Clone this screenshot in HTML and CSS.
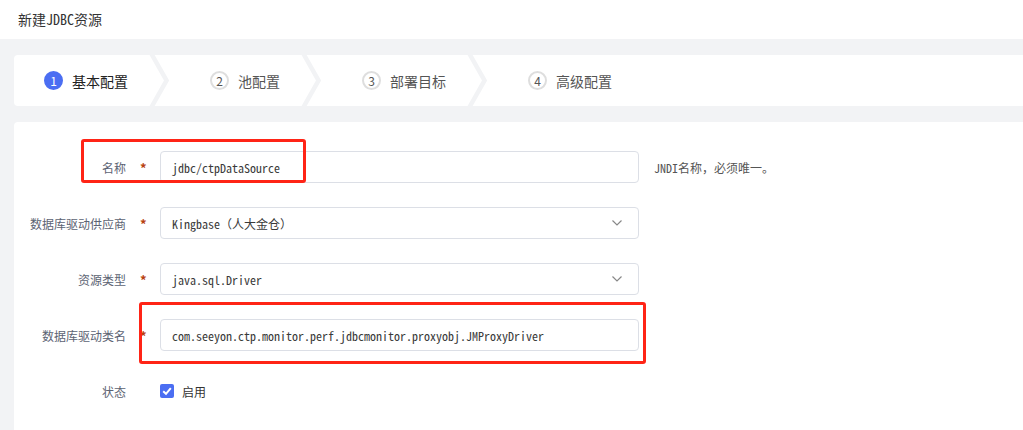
FILE: index.html
```html
<!DOCTYPE html>
<html lang="zh-CN">
<head>
    <meta charset="UTF-8">
    <title>新建JDBC资源</title>
    <link rel="stylesheet" href="styles.css">
</head>
<body>
    <div class="page-header">新建JDBC资源</div>

    <div class="page-body">
        <div class="steps">
            <div class="step step-first active">
                <span class="step-num">1</span>
                <span class="step-title">基本配置</span>
            </div>
            <svg class="step-sep" width="20" height="51" viewBox="0 0 20 51">
                <polyline points="2.5,-1 17.5,25.5 2.5,52" fill="none" stroke="#f2f3f5" stroke-width="4.5"/>
            </svg>
            <div class="step">
                <span class="step-num">2</span>
                <span class="step-title">池配置</span>
            </div>
            <svg class="step-sep" width="20" height="51" viewBox="0 0 20 51">
                <polyline points="2.5,-1 17.5,25.5 2.5,52" fill="none" stroke="#f2f3f5" stroke-width="4.5"/>
            </svg>
            <div class="step">
                <span class="step-num">3</span>
                <span class="step-title">部署目标</span>
            </div>
            <svg class="step-sep" width="20" height="51" viewBox="0 0 20 51">
                <polyline points="2.5,-1 17.5,25.5 2.5,52" fill="none" stroke="#f2f3f5" stroke-width="4.5"/>
            </svg>
            <div class="step">
                <span class="step-num">4</span>
                <span class="step-title">高级配置</span>
            </div>
        </div>

        <div class="form-card">
            <div class="form-row">
                <label class="form-label">名称</label>
                <span class="required">*</span>
                <div class="input">jdbc/ctpDataSource</div>
                <span class="form-tip">JNDI名称，必须唯一。</span>
            </div>
            <div class="form-row">
                <label class="form-label">数据库驱动供应商</label>
                <span class="required">*</span>
                <div class="input select">
                    Kingbase（人大金仓）
                    <svg class="caret" width="10" height="6" viewBox="0 0 10 6">
                        <polyline points="0.5,0.5 5,5 9.5,0.5" fill="none" stroke="#888" stroke-width="1.2"/>
                    </svg>
                </div>
            </div>
            <div class="form-row">
                <label class="form-label">资源类型</label>
                <span class="required">*</span>
                <div class="input select">
                    java.sql.Driver
                    <svg class="caret" width="10" height="6" viewBox="0 0 10 6">
                        <polyline points="0.5,0.5 5,5 9.5,0.5" fill="none" stroke="#888" stroke-width="1.2"/>
                    </svg>
                </div>
            </div>
            <div class="form-row">
                <label class="form-label">数据库驱动类名</label>
                <span class="required">*</span>
                <div class="input">com.seeyon.ctp.monitor.perf.jdbcmonitor.proxyobj.JMProxyDriver</div>
            </div>
            <div class="form-row">
                <label class="form-label">状态</label>
                <span class="required"></span>
                <span class="checkbox">
                    <svg width="14" height="14" viewBox="0 0 14 14">
                        <polyline points="3.2,7.2 6,9.8 10.8,4.2" fill="none" stroke="#fff" stroke-width="2"/>
                    </svg>
                </span>
                <span class="checkbox-label">启用</span>
            </div>

            <!-- red highlight boxes drawn over the form -->
            <div class="mark mark-name"></div>
            <div class="mark mark-driver"></div>
        </div>
    </div>
</body>
</html>
```

FILE: styles.css
```css
body {
    margin: 0;
    padding: 0;
    background-color: #f2f3f5;
    font-family: "Noto Sans CJK SC", "Noto Sans", sans-serif;
    color: #333;
    overflow: hidden;
}

.page-header {
    height: 39px;
    line-height: 38px;
    padding-left: 18px;
    background-color: #fff;
    font-family: "Noto Sans Mono CJK SC", "Noto Sans CJK SC", monospace;
    font-size: 14px;
    color: #333;
}

.page-body {
    padding: 16px 0 0 14px;
}

/* Steps bar */
.steps {
    display: flex;
    align-items: center;
    height: 51px;
    background-color: #fff;
    border-radius: 4px 0 0 4px;
    margin-bottom: 16px;
}

.step {
    display: flex;
    align-items: center;
    flex-shrink: 0;
    padding: 0 21px 0 41px;
    font-size: 14px;
    color: #555;
}

.step-first {
    padding-left: 30px;
}

.step-title {
    white-space: nowrap;
}

.step-sep {
    display: block;
    flex-shrink: 0;
}

.step-num {
    box-sizing: border-box;
    width: 19px;
    height: 19px;
    flex-shrink: 0;
    border-radius: 50%;
    border: 2px solid #dedede;
    display: flex;
    align-items: center;
    justify-content: center;
    font-size: 12px;
    color: #555;
    margin-right: 9px;
}

.step.active .step-num {
    border-color: #4b6ef2;
    background-color: #4b6ef2;
    color: #fff;
}

.step.active .step-title {
    color: #222;
}

/* Form */
.form-card {
    position: relative;
    background-color: #fff;
    border-radius: 4px 0 0 0;
    padding: 29px 0 30px 0;
    display: flex;
    flex-direction: column;
    gap: 24px;
}

.form-row {
    display: flex;
    align-items: center;
    height: 32px;
}

.form-label {
    width: 112px;
    text-align: right;
    font-size: 12px;
    color: #5c6373;
}

.required {
    width: 20px;
    padding-left: 14px;
    color: #b8420e;
    font-size: 13px;
    font-weight: bold;
    line-height: 1;
}

.input {
    box-sizing: border-box;
    width: 479px;
    height: 32px;
    border: 1px solid #dcdfe6;
    border-radius: 4px;
    padding: 0 12px 0 11px;
    display: flex;
    align-items: center;
    justify-content: space-between;
    font-family: "Noto Sans Mono CJK SC", "Liberation Mono", monospace;
    font-size: 12px;
    color: #3a3a3a;
    white-space: nowrap;
}

.caret {
    display: block;
    margin-right: 4px;
}

.form-tip {
    margin-left: 15px;
    font-family: "Noto Sans Mono CJK SC", "Noto Sans CJK SC", monospace;
    font-size: 12px;
    color: #555;
}

.checkbox {
    width: 14px;
    height: 14px;
    border-radius: 2px;
    background-color: #4b6ef2;
    display: flex;
}

.checkbox-label {
    margin-left: 8px;
    font-size: 12px;
    color: #333;
}

/* Annotation boxes */
.mark {
    position: absolute;
    box-sizing: border-box;
    border: 3px solid #ff2416;
    border-radius: 3px;
}

.mark-name {
    left: 67px;
    top: 17px;
    width: 225px;
    height: 44px;
}

.mark-driver {
    left: 125px;
    top: 180px;
    width: 507px;
    height: 62px;
}
```
